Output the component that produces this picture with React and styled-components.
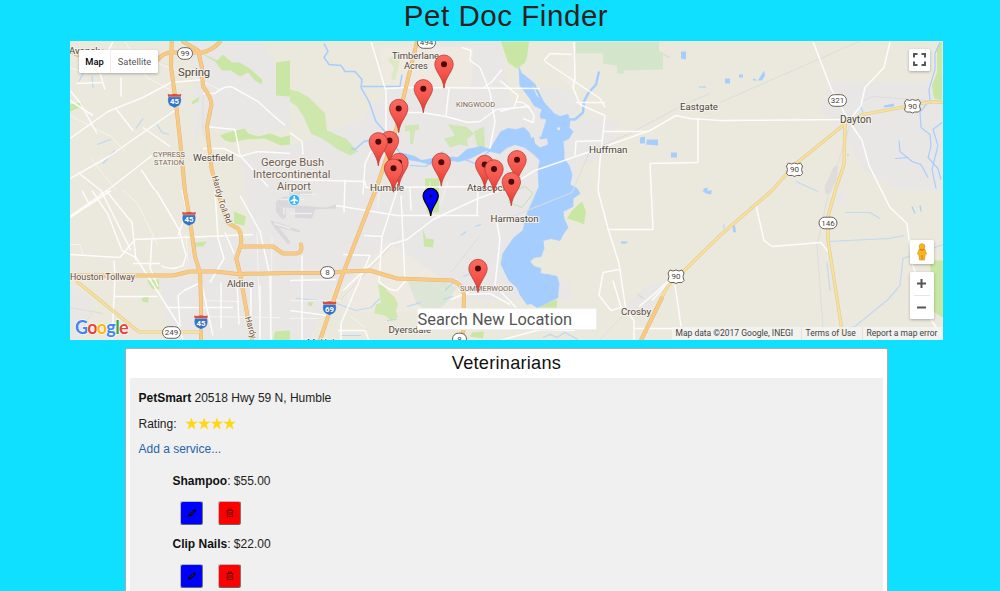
import React from "react";
import styled, { createGlobalStyle } from "styled-components";

const GlobalStyle = createGlobalStyle`
  * { box-sizing: border-box; }
  html, body { margin: 0; height: 100%; overflow: hidden; }
  body {
    background: #0fe0ff;
    color: #222;
    font-family: "Liberation Sans", Arial, sans-serif;
    font-size: 12px;
  }
`;

const Page = styled.div`
  height: 591px;
  overflow: hidden;
  display: flex;
  flex-direction: column;
`;

const Title = styled.h1`
  flex: none;
  margin: 0;
  width: 1012px;
  height: 40px;
  line-height: 32px;
  font-size: 29.5px;
  font-weight: 400;
  letter-spacing: 0.55px;
  text-align: center;
  color: #30201d;
`;

const MapFrame = styled.section`
  position: relative;
  width: 872.5px;
  height: 299.5px;
  margin-left: 70px;
  margin-top: 0.5px;
  overflow: hidden;
  flex: none;
  font-family: Roboto, sans-serif;
`;

const MapCanvas = styled.svg`
  display: block;
  width: 873px;
  height: 300px;
`;

const Control = styled.div`
  position: absolute;
  display: flex;
  background: #fff;
  border-radius: 1.5px;
  box-shadow: 0 1px 3px rgba(0, 0, 0, 0.28);
`;

const TypeSwitch = styled(Control)`
  left: 9px;
  top: 9px;
  width: 79px;
  height: 23px;
`;

const TypeButton = styled.button`
  flex: 0 0 ${(p) => p.$width}px;
  padding: 0;
  border: 0;
  border-left: ${(p) => (p.$active ? "0" : "1px solid #eee")};
  background: none;
  font: ${(p) => (p.$active ? 500 : 400)} 9.3px Roboto, sans-serif;
  color: ${(p) => (p.$active ? "#000" : "#565656")};
`;

const IconControl = styled(Control)`
  right: ${(p) => p.$right}px;
  top: ${(p) => p.$top}px;
  width: ${(p) => p.$width}px;
  height: ${(p) => p.$height}px;
  align-items: center;
  justify-content: center;
`;

const ZoomControl = styled(IconControl)`
  flex-direction: column;
`;

const ZoomButton = styled.button`
  width: 16px;
  flex: 1;
  display: grid;
  place-items: center;
  padding: 0;
  border: 0;
  background: none;
  & + & { border-top: 1px solid #e6e6e6; }
`;

const SearchInput = styled.input`
  position: absolute;
  left: 346.5px;
  top: 267.5px;
  width: 180px;
  height: 22px;
  padding: 0;
  border: 1px solid #eee;
  background: #fff;
  font: 400 16.4px Roboto, sans-serif;
  color: #555;
  &::placeholder { color: #555; opacity: 1; }
`;

const Attribution = styled.footer`
  position: absolute;
  right: 0;
  bottom: 0;
  height: 13px;
  display: flex;
  background: rgba(245, 245, 245, 0.76);
  font-size: 8.5px;
  line-height: 13px;
  color: #444;
  white-space: nowrap;
`;

const Credit = styled.span`
  width: ${(p) => p.$width}px;
  padding-left: 4px;
  & + & { border-left: 1px solid #e4e2dc; }
`;

const Panel = styled.main`
  width: 763px;
  height: 300px;
  margin: 8px 0 0 125px;
  padding: 0 4px;
  background: #fff;
  border: 1px solid #aaa;
  border-radius: 2px 2px 0 0;
  flex: none;
`;

const PanelTitle = styled.h2`
  margin: 0;
  height: 28.5px;
  line-height: 29px;
  font-size: 18.2px;
  font-weight: 400;
  letter-spacing: 0.25px;
  text-align: center;
  color: #111;
`;

const Listing = styled.article`
  height: 260px;
  padding: 8px 8.5px;
  background: #f0f0f0;
`;

const Line = styled.div`
  height: 25.6px;
  display: flex;
  align-items: center;
  white-space: pre;
  b { color: #111; }
`;

const Stars = styled.svg`
  width: 52px;
  height: 13px;
  margin-left: 8px;
  fill: #ffd814;
`;

const ServiceLink = styled.a`
  color: #2565a8;
`;

const Services = styled.div`
  padding: 5.7px 0 0 34px;
`;

const Service = styled.div`
  height: 63.7px;
`;

const Actions = styled.div`
  display: flex;
  gap: 15px;
  padding: 7px 0 0 7.5px;
`;

const ActionButton = styled.button`
  width: 23px;
  height: 24px;
  display: grid;
  place-items: center;
  padding: 0;
  background: ${(p) => p.$color};
  border: 1px solid;
  border-color: #b9b9b9 #777 #666 #b9b9b9;
  border-bottom-width: 1.5px;
  border-radius: 2.5px;
`;

const shade = {
  minor: { stroke: "#fff", strokeWidth: 1.5 },
  thin: { stroke: "#fbfaf5", strokeWidth: 1 },
};

const arterials = [
  "M70 90L80 102L97 133M70 138L108 111L143 97L171 82L205 79M70 178L109 156L176 109M115 107L133 130M113 41L99 69L105 89M121 77L121 96M70 216L111 187L152 155M141 169L155 190M143 127L170 146",
  "M70 100L93 115M76 83L103 82M78 172L101 190L131 250M82 190L90 205M203 93L215 93Q225 84 233 87L258 101L270 112L285 125M203 148L224 148L240 156L258 151L290 153M205 126L235 129L240 155L268 186",
  "M70 217L111 190M92 190L108 214L122 250L136 257L157 290L178 323L183 340M70 254L120 257L135 239L253 234M106 190L132 222L136 260M133 263L160 263M152 237L150 267L158 286M114 260L115 276L112 340M161 265Q170 271 183 265L186 255L179 229L168 210L156 190M182 190L187 211L178 235",
  "M215 190L218 238L224 258L210 282M225 232L234 253M240 195L260 231L270 275L271 340M200 276L213 335M201 282L184 290L178 295L180 326M166 307L233 307M115 296L158 296M221 282L221 328M237 281L239 324M251 280L251 340M260 285L260 340",
  "M371 41L379 67L386 91L386 130M386 88L408 87L540 88M401 112L422 112L446 116L468 122L480 121L496 109L530 106M462 47L471 50L470 60L480 67L490 92L495 121L490 148M449 88L446 115M502 69L491 82L482 88",
  "M363 194L365 163L371 151L382 152M290 179L365 181L366 187L506 186M345 179L344 212M290 132L302 141L303 154M336 205L397 215L479 215M478 190L477 214M397 190L382 236L379 281Q388 290 397 290L405 281L401 195",
  "M343 290L377 258L390 244L407 239L433 219L478 198L506 188L535 170L570 158L616 142L650 130L676 115L690 118L720 120L846 119M410 188L411 210M364 235L382 236M302 255L302 340M343 254L370 255L341 323L341 340",
  "M290 280L336 279M290 310L327 315M338 330L365 330L369 340M466 294L490 293L510 304M451 299L472 290M496 217L500 239L495 285L516 307M500 340L540 329L575 330",
  "M574 41L575 78L573 87L580 104L605 115L600 160L598 190L608 228L619 263L626 310L634 320L634 340M544 60L550 53L572 54M545 61L569 77L600 98L605 107M576 102L605 102M603 131L648 131M603 140L576 141L575 155",
  "M698 118L698 162L650 163L653 229L607 229M500 80L518 95L514 107L500 111M515 102Q525 98 534 115L533 122L523 118M619 269L603 272L599 295L611 310L621 307L613 280M652 300L670 280M675 284L681 326M634 328L681 328",
  "M813 41L831 88L848 119L862 140L869 165L890 207L907 223L912 262M890 41L884 67L865 87L861 105L850 119M756 205L764 240L772 246L821 242L828 251M675 273L657 291L639 306M912 262L930 318L942 335",
];
const highways = [
  "M171.7 41L171 66L176 103L180 139L185 191L190 220L195 256L200 272L201 300L201 340",
  "M183 41L198 50L201.7 66L203 86Q211 96 211.5 104L207 126L211.7 169L218 192L227 222L238 228Q242 233 241 244L236.3 258L240 273L247 313L252 340",
  "M158 59Q164 52 171 52H202Q214 49 220 41",
  "M240.7 246H273L283 253H296Q303 252 301 244",
  "M70 275H173L190 271H216L237 273.4L290 272.6H327L345 271L370 270L397 278L452 280Q463 284 464 294L463 340",
  "M417 41L403 99L397 126L377 186L343 273L329 313L320 340",
  "M641 340L662 297",
  "M72 51Q82 60 103 51",
];
const yellowRoads = [
  "M77 281L139 331.5H200",
  "M662 297Q666 285 677 277L720 235L772 190L795 164L848 121L863 114L912 105Q930 100 943 102",
  "M845 124L844 164L835 191L828 216V240L842 330L842 340",
];

const places = [
  ["Spring", 178, 75, 11.3], ["Westfield", 193, 160.5, 9.8], ["Aldine", 227, 286, 9.6],
  ["Timberlane", 392, 58, 9.4], ["Acres", 404, 68, 9.4], ["Humble", 370, 190, 9.8],
  ["Atascocita", 467, 190, 9.8], ["Harmaston", 490.5, 221, 9.7], ["Huffman", 589, 152, 9.8],
  ["Eastgate", 680, 109, 9.7], ["Dayton", 840, 122.5, 10.1], ["Crosby", 621, 314.5, 9.7],
  ["Dyersdale", 388.5, 332, 9.7], ["McHahart", 307, 345, 9.5], ["Avonak", 69, 53, 9.5],
];
const districts = [
  ["CYPRESS", 153, 156.5], ["STATION", 154, 164], ["KINGWOOD", 456, 106], ["SUMMERWOOD", 460, 290],
];
const airport = [["George Bush", 261, 165], ["Intercontinental", 253, 177], ["Airport", 277, 189]];
const pins = [
  [444, 63.7], [423.3, 88.3], [398.7, 108], [389.5, 140], [378.3, 141.3], [399, 162],
  [393.5, 167.7], [441.3, 161.7], [484.7, 164], [494, 168.5], [517, 159.3], [511.3, 181.3], [478, 268],
];

function Pin({ x, y, blue }) {
  return (
    <g transform={`translate(${x} ${y}) scale(${blue ? 0.83 : 1})`}>
      <path
        d="M0 24C-1 13-9.2 7-9.2 0A9.2 9.2 0 0 1 9.2 0C9.2 7 1 13 0 24Z"
        fill={blue ? "#0000fb" : "url(#pin)"}
        stroke={blue ? "#000" : "#bd3b35"}
        strokeWidth={blue ? 1.4 : 0.8}
      />
      <circle r={blue ? 1.5 : 3} fill={blue ? "#000" : "#4a0b0b"} />
    </g>
  );
}

function Route({ x, y, n, us }) {
  const w = n.length > 2 ? 18 : n.length > 1 ? 15 : 14;
  return (
    <g transform={`translate(${x} ${y})`}>
      {us ? (
        <path d="M-6-6.5L-3-5.5L0-6.5L3-5.5L6-6.5L8-3.5L7 0L8 4L6 6H2L0 7L-2 6H-6L-8 4L-7 0L-8-3.5Z" fill="#fff" stroke="#6b625b" strokeWidth="1" />
      ) : (
        <rect x={-w / 2} y="-5.8" width={w} height="11.6" rx="5.8" fill="#fff" stroke="#6b625b" strokeWidth="1" />
      )}
      <text y="2.9" textAnchor="middle" fontSize="8" fill="#493f39">{n}</text>
    </g>
  );
}

function Interstate({ x, y, n }) {
  return (
    <g transform={`translate(${x} ${y})`}>
      <path d="M-6.4-3.8H6.4Q8 3 4 5.5L0 7.6L-4 5.5Q-8 3-6.4-3.8Z" fill="#3475c7" stroke="#fff" strokeWidth=".5" />
      <path d="M-6.8-6.5L-4-6L0-6.8L4-6L6.8-6.5L6.4-3.8H-6.4Z" fill="#d84e42" />
      <text y="3.7" textAnchor="middle" fontSize="7.8" fontWeight="700" fill="#fff">{n}</text>
    </g>
  );
}

function HoustonMap() {
  return (
    <MapCanvas viewBox="70 40.5 873 300" role="img" aria-label="Map of veterinarians">
      <defs>
        <linearGradient id="pin" x2="0" y2="1">
          <stop stopColor="#fb6b61" /><stop offset=".55" stopColor="#f3554b" /><stop offset="1" stopColor="#d93930" />
        </linearGradient>
        <path id="hardy" d="M212 176L221 210L227 224" />
        <path id="hardySouth" d="M245 317L254 348" />
      </defs>
      <rect x="70" y="40" width="874" height="301" fill="#ebe8de" />
      <g fill="#e8e7e5">
        <path d="M187 41H270L290 80V128L240 135L203 126L194 145V70ZM240 156L290 145L360 120L386 88L400 60L420 41H500L510 100L575 115L620 120L608 155L578 165L570 208L540 240L530 260L540 300H470L440 278L390 245L340 285L250 270V224Z" />
        <path d="M213 237H290V272L340 274L310 340H201V276L180 255ZM830 81H943V190H900L863 170L845 137L820 110ZM623 307L650 283L671 280L641 318ZM70 285L92 300L82 340H70ZM160 280L200 276V340H170Z" />
        <path d="M540 85L570 90L580 105L570 132L545 125ZM550 280H570V300H550ZM838 190H845V204H835Z" />
      </g>
      <g fill="#eeeae1"><path d="M378 45L474 47L471 86L386 88ZM387 241L440 277L463 290V311L350 312L345 286ZM560 60L575 55V90L559 77Z" /></g>
      <path d="M262 41H372L386 88V92L352 120L327 128L307 96L290 89L276 62Z" fill="#ebe8de" />

      <g fill="#c9e6a4" strokeLinejoin="round">
        <path d="M501 41H529L527 56L525 62L517 68L508 62ZM198 51L205 54L217 60L223 54L232 62L240 62L251 69L262 79V84L255 80L248 72L240 76L231 70L222 70L215 61ZM276 62L290 60V96L276 95ZM220 135L228 132L245 128L248 133L258 136L270 133L281 137L290 135V144L281 145L265 138L245 139L232 142L225 140ZM192 101L200 96L198 101L192 104Z" />
        <path d="M290 89L298 91L309 97L325 113L327 130L336 134L346 138L358 151L350 155L338 149L322 138L311 133L304 117L297 106L290 101Z" opacity=".85" />
        <path d="M425 178L439 178L439 212L427 212ZM423 229L426 238L434 239L433 247L424 246ZM572 210L582 201L586 211L584 224L577 221L567 218ZM536 307L557 299V307ZM943 260H930V266L933 286L933 311L943 317ZM937 46L942 41V100L934 98L932 85L937 72ZM234 211L246 216L244 225L234 223ZM195 242L207 241L203 246L195 246ZM147 280L159 279L159 289L152 288ZM142 297L149 296L148 302L142 301ZM70 104L82 102L83 106L70 111ZM275 331L290 330V340H273ZM472 332L484 331L483 338L470 336ZM308 302L313 301L312 306L308 305Z" />
        <path d="M378 284L384 285L387 290L395 297L398 304L396 311L398 317L391 320L385 315L374 313L376 304L381 302Z" opacity=".8" />
        <path d="M405 125L419 124L419 129L415 130L413 144L410 143L410 130L405 131ZM448 124L466 126L474 133L467 139L468 146L460 144L450 147L444 138L455 135ZM474 131L484 126L485 147L477 146Z" opacity=".75" />
        <path d="M388 60L397 52L400 60L395 80L391 78L394 67Z" opacity=".45" />
      </g>
      <path d="M576 41H659V50L671 57L667 57L663 54V69L624 70V73L617 73V65L603 63V53H576Z" fill="#d3e5cb" />
      <path d="M408 281L445 282L457 287L445 304L433 312L417 304Z" fill="#d8e5d3" opacity=".8" />

      <g fill="#a5ceff" stroke="#a5ceff" strokeWidth=".8" strokeLinejoin="round">
        <path d="M519 67L524 78L532 84L536 95L546 104L554 113L560 116L568 114L570 121L569 127L573 131L569 138L563 141L564 150L564 158L569 165L572 174L570 184L577 188L580 193L573 198L573 206L563 211L564 218L568 227L563 234L560 240L551 238L543 240L544 248L541 256L534 257L530 261L534 266L541 268L540 273L548 274L557 276L559 283L558 293L558 297L548 302L537 307L531 303L527 304L520 294L517 287L509 280L501 264L503 253L507 247L514 237L523 230L527 213L533 200L539 186L538 170L540 160L533 153L525 147L515 144L507 147L500 153L486 150L470 158L459 161L443 159L430 164L420 161L407 159L399 152L408 154L422 160L442 156L458 157L467 149L481 146L490 149L496 139L501 131L508 128L516 129L524 127L529 132L531 138L536 136L541 137L545 125L540 115L542 109L534 105L530 98L520 85Z" />
        <path d="M681 51H686V59L681 58ZM640 137L645 136V143H640ZM647 139H658V145L646 144ZM671 152H677V157H671ZM699 86H706V87H699ZM753 78L758 80L764 70L765 75L762 80L753 80ZM725 78H730V83H725ZM739 74H743V77H739ZM884 105L894 103V106L884 107ZM704 188L708 187L707 191L703 191ZM733 225L735 225L736 232L733 231ZM702 190H712L711 194L706 193ZM621 241H628L626 243H621Z" strokeWidth="0" />
      </g>
      <g fill="none" stroke="#a5ceff" strokeWidth="1.2">
        <path d="M324 43L328 51L324 57L329 64L341 65L345 71L355 71L362 79L361 87L369 101L376 121L384 130L399 151M362 86L400 86L402 74M373 139L364 141L355 149L351 148" strokeWidth="1.5" />
        <path d="M522 74L534 84L545 106M599 71L596 84L588 93L584 101L583 112L575 119L562 119" strokeWidth="2.5" strokeLinejoin="round" />
        <path d="M940 42L935 53V69L929 89L930 99L920 112L921 127L930 134L931 146L928 157L938 168L941 179M942 122L933 129L938 145L932 169L936 188M899 140L900 151L912 161L921 164L928 177M895 158L909 157M912 206L915 213M920 205L921 211" />
        <path d="M828 241L889 238L904 235M842 330L855 326L888 299L900 285L903 258L943 244M827 262L830 290M845 212L870 212L880 218M796 181L818 191" opacity=".6" />
        <path d="M402 159Q410 151 420 160L443 163L460 157L475 163L490 150M410 165L426 166L443 151" />
        <path d="M92 75L93 87M84 71L79 81M120 53L113 68M97 144L111 139M143 118L136 128M115 150L103 163M157 124L162 132L169 134M296 298L331 301L356 310L371 307L380 298M543 337L550 334L557 337L565 332L578 339" opacity=".65" />
        <path d="M387 320L397 319M407 306L421 302M443 299L453 296M445 290L454 281M463 276L469 274M461 235L466 231M475 226L481 224M340 335H361M860 104L863 112M724 224V228M733 225L734 232M848 153V156" opacity=".7" />
      </g>
      <path d="M497 155Q511 148 516 158L523 161L529 160L535 165L538 178L528 186L512 210L500 213V170Z" fill="#e8e7e5" />
      <path d="M509 202Q508 191 525 186L533 193L522 207Z" fill="none" stroke="#c5dfb2" />
      <path d="M533 133L538 132L540 139L547 138L548 144L540 147L535 143ZM542 118L546 119L545 124L541 123ZM570 122L574 120L574 124ZM557 127L560 127L560 130L557 129Z" fill="#e8e7e5" />

      <g fill="none" stroke="#ddd" strokeWidth="1">
        <path d="M720 102L859 41M500 221L572 192L590 150L630 133L684 104L710 93M340 300L400 236M451 272L480 235M599 340L624 314M829 190L817 245L824 340M850 124L838 163M862 101L872 96L942 101M203 95V130L214 158M70 307L103 313M82 328L92 312" />
      </g>
      <g fill="#d9d9dc">
        <path d="M276 201L284 196H289V191H312V195H298V205L326 207L336 204V208L315 209L312 218L295 217V208L286 207V217L282 219L276 211ZM270 220L284 224L300 230V232L279 227L291 242L288 244L274 227Z" />
        <path d="M838 164L834 166L825 185V193H830L837 179Z" opacity=".7" />
        <path d="M637 292L646 299L640 297Z" />
      </g>
      <g fill="none" stroke="#eeeef0" strokeWidth="1.5"><path d="M280 199H305M300 194H317M290 213H312M284 207L284 214M274 223L291 228" /></g>

      <g fill="none" {...shade.minor} opacity=".9" strokeLinejoin="round">{arterials.map((d) => <path key={d} d={d} />)}</g>
      <g fill="none" {...shade.thin} opacity=".65">
        <path d="M70 115L111 136L125 151M150 60L190 75L222 90M91 158L116 190M125 41L147 77L171 90M70 67L87 73M70 244H80L83 254M123 190L137 202L158 245M151 253V266M186 234L188 262M205 300L240 301M204 316L280 317M290 300H341M290 318H319M350 315L365 327M380 181L378 208M395 171L393 185M430 181V197M448 181L441 203M458 278L452 281M272 237L271 316M257 232L259 301" />
      </g>
      <g fill="none" strokeLinecap="round" strokeLinejoin="round">
        {highways.map((d) => <path key={d} d={d} stroke="#e3b676" strokeWidth="4" />)}
        {yellowRoads.map((d) => <path key={d} d={d} stroke="#dfcc91" strokeWidth="3.2" />)}
        {yellowRoads.map((d) => <path key={`${d}f`} d={d} stroke="#fae09a" strokeWidth="2.1" />)}
        {highways.map((d) => <path key={`${d}f`} d={d} stroke="#f9ca83" strokeWidth="3" />)}
      </g>

      <g fontFamily="Roboto, sans-serif" stroke="#f4f2eb" strokeWidth="2" paintOrder="stroke" strokeLinejoin="round">
        <g fill="#50463f">{places.map(([t, x, y, s]) => <text key={t} x={x} y={y} fontSize={s}>{t}</text>)}</g>
        <g fill="#7b6859" fontSize="7.5">{districts.map(([t, x, y]) => <text key={t} x={x} y={y}>{t}</text>)}</g>
        <g fill="#705e55" fontSize="11.1">{airport.map(([t, x, y]) => <text key={t} x={x} y={y}>{t}</text>)}</g>
        <text x="70" y="279" fontSize="8.8" fill="#6b4e38">Houston Tollway</text>
        <text fontSize="8.5" fill="#6b4e38"><textPath href="#hardy">Hardy Toll Rd</textPath></text>
        <text fontSize="8.5" fill="#6b4e38"><textPath href="#hardySouth">Hardy</textPath></text>
      </g>
      <g fontFamily="Roboto, sans-serif">
        <Route x={185} y={53} n="99" />
        <Route x={426.5} y={42} n="494" />
        <Route x={327.5} y={272} n="8" />
        <Route x={171.5} y={332} n="249" />
        <Route x={459.5} y={338.5} n="8" />
        <Route x={837.5} y={100} n="321" />
        <Route x={828} y={222.5} n="146" />
        <Route x={912.5} y={105.5} n="90" us />
        <Route x={794.5} y={169} n="90" us />
        <Route x={676} y={276} n="90" us />
        <Interstate x={174.5} y={100} n="45" />
        <Interstate x={189} y={218} n="45" />
        <Interstate x={201} y={321.5} n="45" />
        <Interstate x={329.5} y={307.5} n="69" />
      </g>
      <g transform="translate(294.3 199.5)">
        <circle r="5.6" fill="#31b5ed" stroke="#fff" strokeWidth=".7" />
        <path d="M-.8-4H.8V-1.2L4 .8V1.8L.8 1V3L2 4H-2L-.8 3V1L-4 1.8V.8L-.8-1.2Z" fill="#fff" />
      </g>
      {pins.map(([x, y]) => <Pin key={`${x}-${y}`} x={x} y={y} />)}
      <Pin x={430.7} y={195.5} blue />
      <text x="75" y="333.5" textLength="53.5" fontFamily="Lato, sans-serif" fontSize="18" fontWeight="700" stroke="#fff" strokeWidth="1.2" paintOrder="stroke">
        <tspan fill="#4285f4">G</tspan><tspan fill="#ea4335">o</tspan><tspan fill="#fbbc05">o</tspan>
        <tspan fill="#4285f4">g</tspan><tspan fill="#34a853">l</tspan><tspan fill="#ea4335">e</tspan>
      </text>
    </MapCanvas>
  );
}

function RatingStars({ count }) {
  return (
    <Stars viewBox="0 0 52 13" aria-label={`${count} stars`}>
      {Array.from({ length: count }, (_, i) => (
        <path key={i} transform={`translate(${6.5 + i * 12.7} 7)`} d="M0-6.6L1.5-2.2H6.3L2.5 .6L3.9 5.5L0 2.5L-3.9 5.5L-2.5 .6L-6.3-2.2H-1.5Z" />
      ))}
    </Stars>
  );
}

function PencilIcon() {
  return (
    <svg width="10" height="10" viewBox="0 0 10 10">
      <path d="M.8 9L1.6 6.2L6.4 1.8Q8.5 .5 9 2.2Q9.2 3 8.4 3.8L3.7 8.2Z" fill="#080818" />
      <path d="M3.2 6.4L6.8 3.2" stroke="#2424a0" strokeWidth=".7" />
    </svg>
  );
}

function TrashIcon() {
  return (
    <svg width="8" height="10" viewBox="0 0 8 10" fill="none" stroke="#66100c" strokeWidth="1">
      <path d="M.5 2.5H7.5M2.5 2V1H5.5V2M1.3 2.5V8.5H6.7V2.5M3 4V7.3M5 4V7.3" />
    </svg>
  );
}

function ServiceItem({ name, price }) {
  return (
    <Service>
      <Line><b>{name}</b>: {price}</Line>
      <Actions>
        <ActionButton $color="#00f" aria-label="Edit"><PencilIcon /></ActionButton>
        <ActionButton $color="#f00" aria-label="Delete"><TrashIcon /></ActionButton>
      </Actions>
    </Service>
  );
}

export default function App() {
  return (
    <Page>
      <GlobalStyle />
      <Title>Pet Doc Finder</Title>
      <MapFrame>
        <HoustonMap />
        <TypeSwitch>
          <TypeButton $active $width={31}>Map</TypeButton>
          <TypeButton $width={48}>Satellite</TypeButton>
        </TypeSwitch>
        <IconControl $right={12.5} $top={8.5} $width={21} $height={21.5}>
          <svg width="13" height="13" viewBox="0 0 13 13" fill="none" stroke="#555" strokeWidth="2">
            <path d="M1 4.5V1H4.5M8.5 1H12V4.5M12 8.5V12H8.5M4.5 12H1V8.5" />
          </svg>
        </IconControl>
        <IconControl $right={9} $top={199.5} $width={24} $height={24}>
          <svg width="12" height="18" viewBox="0 0 12 18">
            <path d="M3 6.5Q6 4.8 9 6.5L10.5 11L9 12L8.5 17H3.5L3 12L1.5 11Z" fill="#fbb51a" stroke="#c88922" strokeWidth=".6" />
            <circle cx="6" cy="3.6" r="2.9" fill="#fbb51a" stroke="#c88922" strokeWidth=".6" />
            <path d="M3.5 6.3Q6 8.5 8.5 6.3M6 12V16" fill="none" stroke="#d67919" />
          </svg>
        </IconControl>
        <ZoomControl $right={9} $top={231.5} $width={24} $height={47}>
          <ZoomButton aria-label="Zoom in"><svg width="9" height="9"><path d="M0 4.5H9M4.5 0V9" stroke="#555" strokeWidth="2" /></svg></ZoomButton>
          <ZoomButton aria-label="Zoom out"><svg width="9" height="9"><path d="M0 4.5H9" stroke="#555" strokeWidth="2" /></svg></ZoomButton>
        </ZoomControl>
        <SearchInput placeholder="Search New Location" />
        <Attribution>
          <Credit $width={129}>Map data ©2017 Google, INEGI</Credit>
          <Credit $width={61}>Terms of Use</Credit>
          <Credit $width={81}>Report a map error</Credit>
        </Attribution>
      </MapFrame>
      <Panel>
        <PanelTitle>Veterinarians</PanelTitle>
        <Listing>
          <Line><b>PetSmart</b> 20518 Hwy 59 N, Humble</Line>
          <Line>Rating:<RatingStars count={4} /></Line>
          <Line><ServiceLink>Add a service...</ServiceLink></Line>
          <Services>
            <ServiceItem name="Shampoo" price="$55.00" />
            <ServiceItem name="Clip Nails" price="$22.00" />
          </Services>
        </Listing>
      </Panel>
    </Page>
  );
}
